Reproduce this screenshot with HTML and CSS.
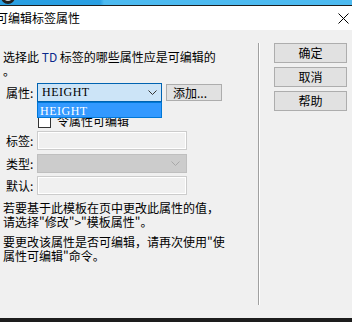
FILE: index.html
```html
<!DOCTYPE html>
<html lang="zh-CN">
<head>
  <meta charset="UTF-8" />
  <title>可编辑标签属性</title>
  <link rel="stylesheet" href="styles.css">
</head>
<body>

<div class="topstrip"><span class="app-icon"></span></div>

<div class="titlebar">
  <span class="title">可编辑标签属性</span>
  <svg class="close" width="11" height="11" viewBox="0 0 11 11">
    <path d="M0.5,0.5 L10.5,10.5 M10.5,0.5 L0.5,10.5" stroke="#000" stroke-width="1" fill="none"/>
  </svg>
</div>

<div class="dialog">
  <div class="left">
    <p class="intro">选择此 <span class="td">TD</span> 标签的哪些属性应是可编辑的<br>。</p>

    <div class="row attr-row">
      <label>属性:</label>
      <div class="select-wrap">
        <div class="select active">
          <span class="val">HEIGHT</span>
          <svg class="chev" width="9" height="5" viewBox="0 0 9 5"><path d="M0.5,0.5 L4.5,4.5 L8.5,0.5" stroke="#333" fill="none"/></svg>
        </div>
        <div class="droplist"><span class="val">HEIGHT</span></div>
      </div>
      <button class="btn add">添加...</button>
    </div>

    <div class="row check-row">
      <span class="checkbox"></span>
      <span>令属性可编辑</span>
    </div>

    <div class="row field">
      <label>标签:</label>
      <div class="input"></div>
    </div>
    <div class="row field">
      <label>类型:</label>
      <div class="input disabled">
        <svg class="chev" width="9" height="5" viewBox="0 0 9 5"><path d="M0.5,0.5 L4.5,4.5 L8.5,0.5" stroke="#a8a8a8" fill="none"/></svg>
      </div>
    </div>
    <div class="row field">
      <label>默认:</label>
      <div class="input"></div>
    </div>

    <p class="note">若要基于此模板在页中更改此属性的值，<br>请选择"修改"&gt;"模板属性"。</p>
    <p class="note">要更改该属性是否可编辑，请再次使用"使<br>属性可编辑"命令。</p>
  </div>

  <div class="sep"></div>

  <div class="right">
    <button class="btn cmd">确定</button>
    <button class="btn cmd">取消</button>
    <button class="btn cmd">帮助</button>
  </div>
</div>

<div class="bottomline"></div>

</body>
</html>
```

FILE: styles.css
```css
/* Reset and base styles */
* {
  box-sizing: border-box;
  margin: 0;
  padding: 0;
}

body {
  font-family: "Noto Sans CJK SC", sans-serif;
  font-size: 12px;
  color: #000;
  background: #f0f0f0;
  width: 352px;
  height: 322px;
  overflow: hidden;
}

.topstrip {
  height: 6px;
  background: linear-gradient(to right, #2a9fe2 0, #2a9fe2 100px, #4dbaf0 104px, #4dbaf0 100%);
  border-bottom: 1px solid #1d1d1d;
  position: relative;
  overflow: hidden;
}

.app-icon {
  position: absolute;
  left: 1px;
  top: -10px;
  width: 14px;
  height: 14px;
  border-radius: 50%;
  border: 3px solid #222;
  background: #ddd;
}

.titlebar {
  height: 24px;
  background: #fff;
  display: flex;
  align-items: center;
  justify-content: space-between;
  padding-right: 3px;
  overflow: hidden;
}

.title {
  margin-left: -4px;
  line-height: 16px;
  white-space: nowrap;
}

.close {
  display: block;
}

.dialog {
  display: flex;
  height: 288px;
}

.left {
  width: 258px;
  padding: 20px 0 0 3px;
}

.intro {
  line-height: 14px;
}

.td {
  color: #0a2a8c;
}

.row {
  display: flex;
  align-items: center;
}

.row label {
  width: 34px;
  padding-left: 3px;
  flex-shrink: 0;
}

.attr-row {
  margin-top: 5px;
  height: 19px;
}

.select-wrap {
  position: relative;
  width: 125px;
  height: 19px;
}

.select {
  height: 19px;
  border: 1px solid #0063b1;
  background: #cce4f7;
  display: flex;
  align-items: center;
  justify-content: space-between;
  padding: 0 4px 0 4px;
}

.val {
  font-family: "Liberation Serif", "DejaVu Serif", serif;
  font-size: 12px;
  letter-spacing: 0.5px;
}

.chev {
  display: block;
}

.droplist {
  position: absolute;
  top: 19px;
  left: 0;
  width: 125px;
  height: 16px;
  background: #3399ff;
  border: 1px solid #0078d7;
  color: #fff;
  padding-left: 2px;
  line-height: 14px;
  z-index: 10;
}

.btn {
  font-family: "Noto Sans CJK SC", sans-serif;
  font-size: 12px;
  background: #e1e1e1;
  border: 1px solid #adadad;
  color: #000;
}

.add {
  width: 56px;
  height: 17px;
  margin-left: 4px;
  text-align: left;
  padding-left: 6px;
  line-height: 14px;
}

.check-row {
  height: 16px;
  margin-top: 11px;
  padding-left: 35px;
  line-height: 16px;
}

.checkbox {
  width: 13px;
  height: 13px;
  border: 1px solid #333;
  background: #fff;
  margin-right: 6px;
}

.field {
  height: 19px;
  margin-top: 4px;
}

.check-row + .field {
  margin-top: 2px;
}

.field + .field + .field {
  margin-top: 3px;
}

.input {
  width: 150px;
  height: 19px;
  border: 1px solid #cccccc;
  background: #f0f0f0;
  box-shadow: inset 0 0 0 1px #fff;
  display: flex;
  align-items: center;
  justify-content: flex-end;
  padding-right: 6px;
}

.input.disabled {
  background: #cccccc;
  border-color: #bfbfbf;
  box-shadow: none;
}

.note {
  line-height: 14px;
  margin-top: 6px;
}

.sep {
  width: 2px;
  height: 262px;
  margin-top: 13px;
  border-left: 1px solid #a0a0a0;
  border-right: 1px solid #fff;
}

.right {
  display: flex;
  flex-direction: column;
  gap: 4px;
  padding: 13px 0 0 14px;
}

.cmd {
  width: 73px;
  height: 20px;
  line-height: 16px;
}

.bottomline {
  height: 4px;
  background: #1d1d1d;
}
```
